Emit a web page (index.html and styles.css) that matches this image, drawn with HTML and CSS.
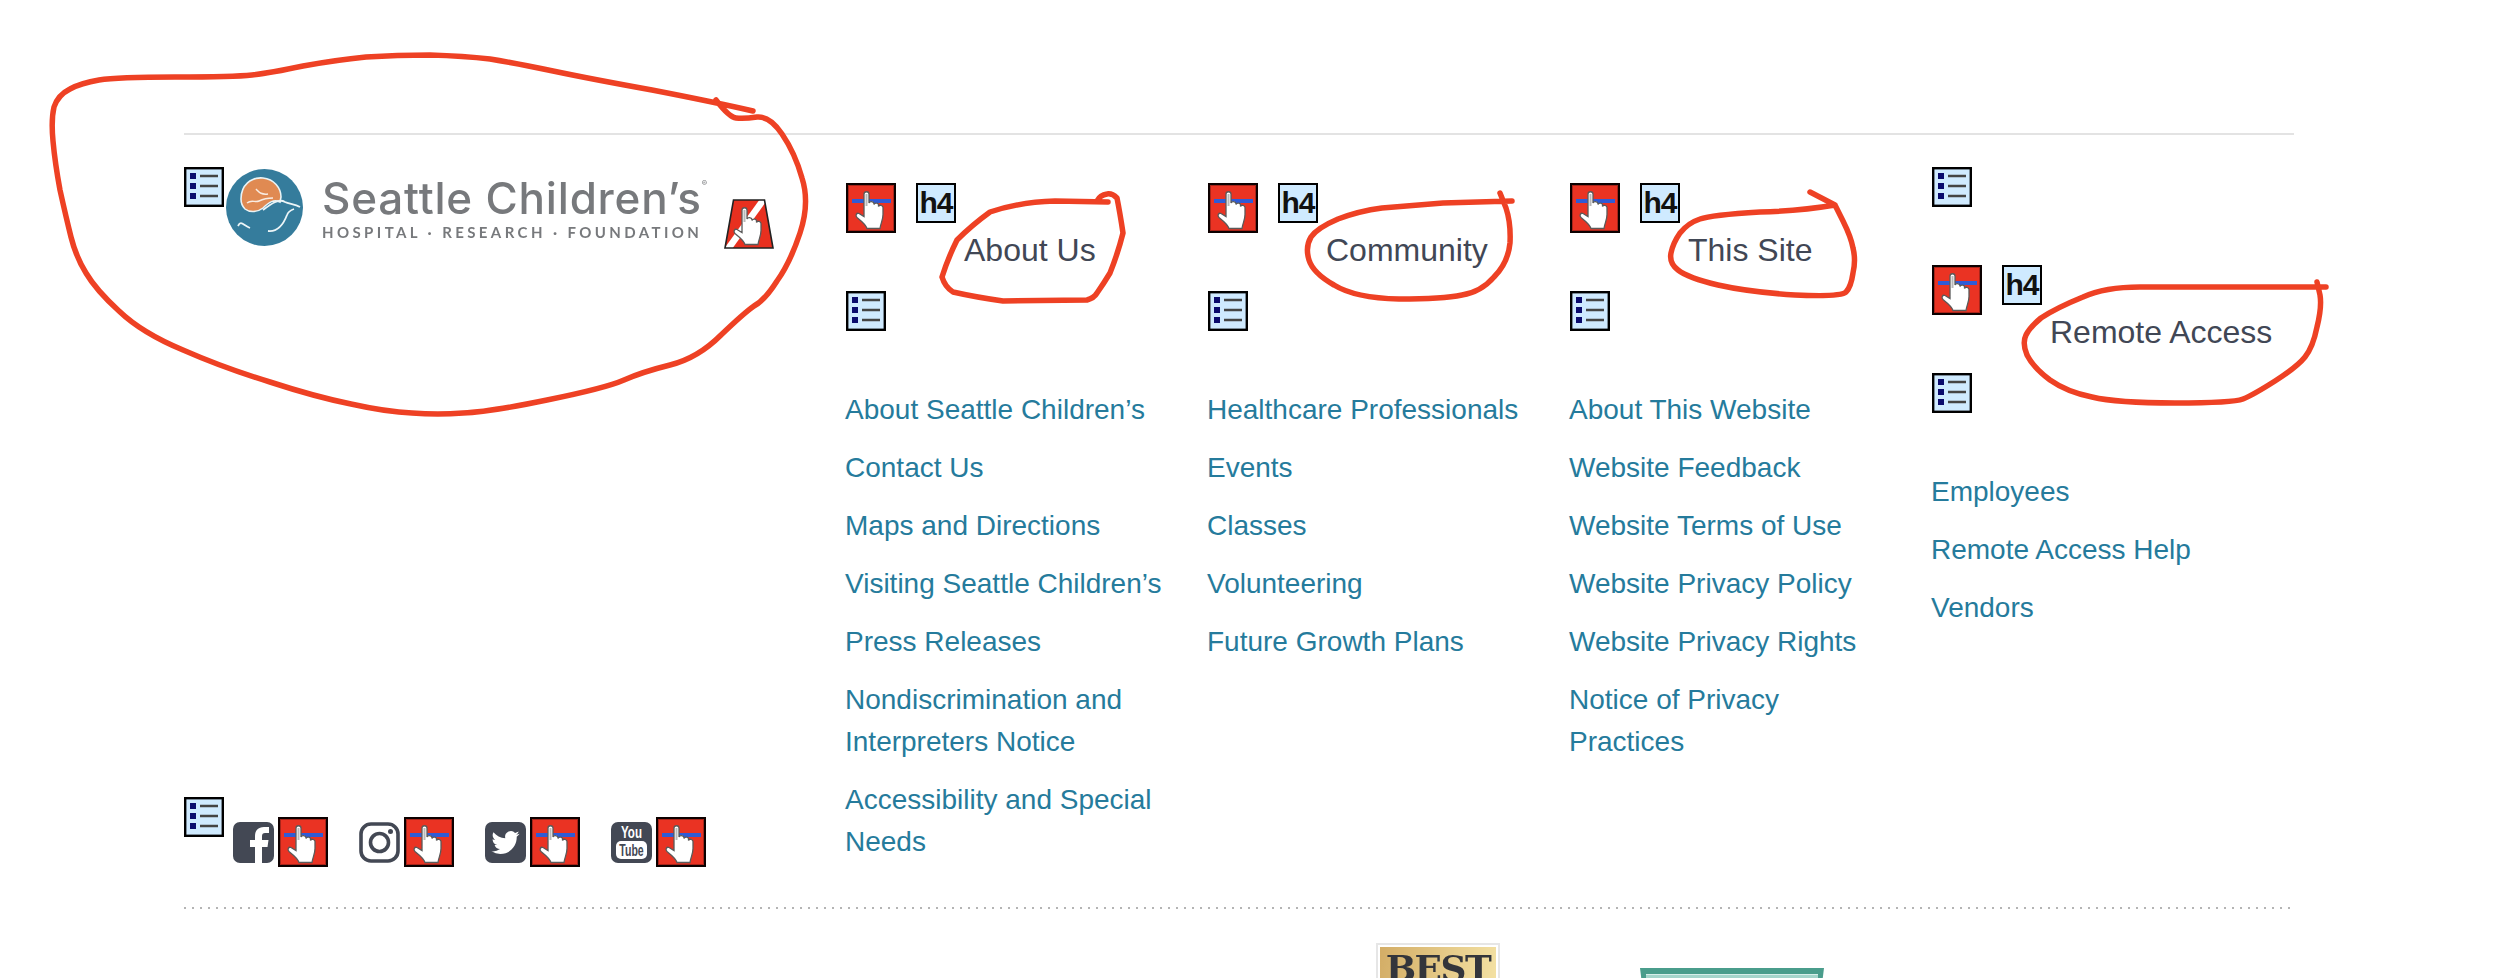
FILE: index.html
```html
<!DOCTYPE html>
<html lang="en">
<head>
<meta charset="utf-8">
<title>Seattle Children's footer</title>
<link rel="stylesheet" href="styles.css">
</head>
<body>
<svg class="sprite" width="0" height="0" aria-hidden="true">
  <defs>
    <symbol id="hand" viewBox="0 0 50 50">
      <path d="M18 11c0-3 5-3 5 0v9c.5-2 4.500-2 5 .5v1c.5-2 4.500-2 4.500.5v1.500c.5-2 4.500-1.500 4.500 1v7c0 5-2 8-3 14H21c-1-4-5-7-10-11-2-2-.5-5 2-4l5 3z" fill="#fff" stroke="#5a5a5a" stroke-width="1.300"/>
      <path d="M19.500 11h2v12h-2z" fill="#b9b9b9"/>
    </symbol>
    <symbol id="hand-box" viewBox="0 0 50 50">
      <rect x="1" y="1" width="48" height="48" fill="#ea3323" stroke="#0c0000" stroke-width="2"/>
      <rect x="2.500" y="2.500" width="45" height="45" fill="none" stroke="#a8251a"/>
      <rect x="6" y="16" width="39" height="4" fill="#2f5bd6"/>
      <use href="#hand"/>
    </symbol>
    <symbol id="list-box" viewBox="0 0 40 40">
      <rect x="1.200" y="1.200" width="37.600" height="37.600" fill="#cfeaff" stroke="#000" stroke-width="2.400"/>
      <rect x="6" y="6" width="6" height="6" fill="#0b0b6d"/>
      <rect x="6" y="16" width="6" height="6" fill="#0b0b6d"/>
      <rect x="6" y="26" width="6" height="6" fill="#0b0b6d"/>
      <path d="M16 9h18M16 19h18M16 29h18" stroke="#444" stroke-width="2.400"/>
    </symbol>
  </defs>
</svg>

<main class="footer">
  <div class="columns">
    <section class="brand">
      <div class="brand-top">
        <svg class="icon-list"><use href="#list-box"/></svg>
        <a class="logo" href="#">
          <svg class="seal" viewBox="0 0 77 77" aria-hidden="true">
            <circle cx="38.500" cy="38.500" r="38.500" fill="#357c9c"/>
            <path d="M15 30c0-14 10-22 22-21 11 1 18 10 18 19l-1 5c-6-3-11 0-17 6-5 4-13 5-18 1-3-3-4-6-4-10z" fill="#e08a52" stroke="#e9f3f5" stroke-width="1.600"/>
            <path d="M21 34c5-4 8 0 12-2s7-3 14-3M30 20c3 3 5 6 12 5" fill="none" stroke="#f8ece2" stroke-width="1.500"/>
            <path d="M37 41c8-6 16-12 22-8 4 2 10 2 15 5M12 57c3-6 5-1 12 2M42 62c8 1 14-3 19-16 1-3 4-5 7-6" fill="none" stroke="#ecf5f7" stroke-width="1.800"/>
          </svg>
          <span class="wordmark">
            <span class="wordmark-name">Seattle Children’s<sup class="reg">®</sup></span>
            <span class="wordmark-sub">HOSPITAL · RESEARCH · FOUNDATION</span>
          </span>
        </a>
        <svg class="trapezoid" viewBox="0 0 50 50" aria-hidden="true">
          <defs><clipPath id="trap"><polygon points="9.500,1 40.500,1 49,49 1,49"/></clipPath></defs>
          <g clip-path="url(#trap)">
            <rect width="50" height="50" fill="#e8301f"/>
            <polygon points="36,0 44,0 8,50 0,50" fill="#fff"/>
          </g>
          <polygon points="9.500,1 40.500,1 49,49 1,49" fill="none" stroke="#222" stroke-width="1.600"/>
          <use href="#hand"/>
        </svg>
      </div>
      <div class="social">
        <svg class="icon-list"><use href="#list-box"/></svg>
        <div class="social-items">
          <a class="social-item" href="#">
            <svg class="social-glyph" viewBox="0 0 41 41" aria-label="Facebook">
              <path d="M7 0h27a7 7 0 0 1 7 7v27a7 7 0 0 1-7 7h-5V25h5.500l1-7H29v-4c0-2 1-3 3-3h4V5h-5c-6 0-9 3.500-9 9v4h-5v7h5v16H7a7 7 0 0 1-7-7V7a7 7 0 0 1 7-7z" fill="#434854"/>
            </svg>
            <svg class="icon-hand"><use href="#hand-box"/></svg>
          </a>
          <a class="social-item" href="#">
            <svg class="social-glyph" viewBox="0 0 41 41" aria-label="Instagram">
              <rect x="2" y="2" width="37" height="37" rx="10" fill="none" stroke="#434854" stroke-width="3.600"/>
              <circle cx="20.500" cy="20.500" r="9" fill="none" stroke="#434854" stroke-width="3.600"/>
              <circle cx="31.500" cy="9.500" r="2.500" fill="#434854"/>
            </svg>
            <svg class="icon-hand"><use href="#hand-box"/></svg>
          </a>
          <a class="social-item" href="#">
            <svg class="social-glyph" viewBox="0 0 41 41" aria-label="Twitter">
              <rect width="41" height="41" rx="7" fill="#434854"/>
              <path transform="translate(6.500 6.500) scale(1.170)" d="M23.953 4.570a10 10 0 0 1-2.825.775 4.958 4.958 0 0 0 2.163-2.723c-.951.555-2.005.959-3.127 1.184a4.920 4.920 0 0 0-8.384 4.482C7.690 8.095 4.067 6.130 1.640 3.162a4.822 4.822 0 0 0-.666 2.475c0 1.710.870 3.213 2.188 4.096a4.904 4.904 0 0 1-2.228-.616v.060a4.923 4.923 0 0 0 3.946 4.827 4.996 4.996 0 0 1-2.212.085 4.936 4.936 0 0 0 4.604 3.417 9.867 9.867 0 0 1-6.102 2.105c-.390 0-.779-.023-1.170-.067a13.995 13.995 0 0 0 7.557 2.209c9.053 0 13.998-7.496 13.998-13.985 0-.210 0-.420-.015-.630A9.935 9.935 0 0 0 24 4.590z" fill="#fff"/>
            </svg>
            <svg class="icon-hand"><use href="#hand-box"/></svg>
          </a>
          <a class="social-item" href="#">
            <svg class="social-glyph" viewBox="0 0 41 41" aria-label="YouTube">
              <rect width="41" height="41" rx="7" fill="#434854"/>
              <text class="yt-you" transform="translate(20.500 15.700) scale(.68 1)" text-anchor="middle">You</text>
              <rect x="5" y="19" width="31" height="18" rx="5" fill="#fff"/>
              <text class="yt-tube" transform="translate(20.500 34) scale(.62 1)" text-anchor="middle">Tube</text>
            </svg>
            <svg class="icon-hand"><use href="#hand-box"/></svg>
          </a>
        </div>
      </div>
    </section>

    <section class="col">
      <div class="col-icons">
        <svg class="icon-hand"><use href="#hand-box"/></svg>
        <span class="h4-tag">h4</span>
      </div>
      <h4 class="col-title">About Us</h4>
      <svg class="icon-list"><use href="#list-box"/></svg>
      <ul class="links">
        <li><a href="#">About Seattle Children’s</a></li>
        <li><a href="#">Contact Us</a></li>
        <li><a href="#">Maps and Directions</a></li>
        <li><a href="#">Visiting Seattle Children’s</a></li>
        <li><a href="#">Press Releases</a></li>
        <li><a href="#">Nondiscrimination and Interpreters Notice</a></li>
        <li><a href="#">Accessibility and Special Needs</a></li>
      </ul>
    </section>

    <section class="col">
      <div class="col-icons">
        <svg class="icon-hand"><use href="#hand-box"/></svg>
        <span class="h4-tag">h4</span>
      </div>
      <h4 class="col-title">Community</h4>
      <svg class="icon-list"><use href="#list-box"/></svg>
      <ul class="links">
        <li><a href="#">Healthcare Professionals</a></li>
        <li><a href="#">Events</a></li>
        <li><a href="#">Classes</a></li>
        <li><a href="#">Volunteering</a></li>
        <li><a href="#">Future Growth Plans</a></li>
      </ul>
    </section>

    <section class="col">
      <div class="col-icons">
        <svg class="icon-hand"><use href="#hand-box"/></svg>
        <span class="h4-tag">h4</span>
      </div>
      <h4 class="col-title">This Site</h4>
      <svg class="icon-list"><use href="#list-box"/></svg>
      <ul class="links">
        <li><a href="#">About This Website</a></li>
        <li><a href="#">Website Feedback</a></li>
        <li><a href="#">Website Terms of Use</a></li>
        <li><a href="#">Website Privacy Policy</a></li>
        <li><a href="#">Website Privacy Rights</a></li>
        <li><a href="#">Notice of Privacy Practices</a></li>
      </ul>
    </section>

    <section class="col col-remote">
      <svg class="icon-list icon-list-lead"><use href="#list-box"/></svg>
      <div class="col-icons">
        <svg class="icon-hand"><use href="#hand-box"/></svg>
        <span class="h4-tag">h4</span>
      </div>
      <h4 class="col-title">Remote Access</h4>
      <svg class="icon-list"><use href="#list-box"/></svg>
      <ul class="links">
        <li><a href="#">Employees</a></li>
        <li><a href="#">Remote Access Help</a></li>
        <li><a href="#">Vendors</a></li>
      </ul>
    </section>
  </div>

  <div class="dotted"></div>

  <div class="badges">
    <div class="badge-best"><span class="badge-best-text">BEST</span></div>
    <div class="badge-teal"><div class="badge-teal-inner"></div></div>
  </div>
</main>

<svg class="scribbles" viewBox="0 0 2514 978" aria-hidden="true">
  <path d="M753 111Q714 102 652 90Q591 79 553 71Q515 63 490 59Q464 56 430 55Q397 55 366 57Q336 60 303 66Q270 73 252 75Q234 77 175 77Q117 77 99 80Q81 83 70 89Q58 95 54 107Q51 120 53 141Q55 163 60 190Q66 217 71 237Q76 257 86 273Q96 290 119 311Q142 333 183 350Q224 368 270 382Q316 397 351 404Q387 412 412 413Q438 415 463 413Q489 412 547 400Q606 388 624 380Q642 372 670 365Q698 358 721 335Q744 313 754 306Q765 300 777 281Q790 263 800 233Q810 203 802 178Q795 153 782 134Q770 116 757 117Q744 119 736 118Q729 117 716 100"/>
  <path d="M1108 202L1055 201Q1020 202 990 212Q972 225 957 240Q948 258 942 277Q945 287 953 292Q975 297 1003 301L1087 300Q1094 298 1097 293Q1104 283 1110 273Q1118 253 1123 233Q1120 213 1117 198Q1112 193 1107 194Q1100 195 1097 201"/>
  <path d="M1512 201L1443 203Q1405 206 1382 208Q1359 211 1338 219Q1317 228 1311 237Q1305 247 1309 260Q1313 273 1334 285Q1355 298 1399 299Q1443 299 1462 295Q1481 292 1494 277Q1508 263 1510 243Q1511 223 1506 208L1500 193"/>
  <path d="M1810 192L1835 205Q1800 211 1760 212Q1711 215 1700 219Q1688 223 1680 233Q1673 243 1671 253Q1669 263 1678 270Q1688 278 1718 285Q1749 292 1795 295Q1841 297 1846 292Q1851 287 1853 273Q1856 260 1853 248Q1851 237 1843 221L1835 205"/>
  <path d="M2326 287L2140 287Q2105 287 2083 297Q2056 308 2041 318Q2030 327 2026 335Q2022 343 2027 355Q2033 367 2050 380Q2067 392 2092 397Q2117 403 2175 403Q2233 403 2243 399Q2253 395 2275 381Q2297 367 2305 357Q2313 347 2317 327Q2322 307 2320 295L2317 282"/>
</svg>
</body>
</html>
```
FILE: styles.css
```css
html, body {
  margin: 0;
  padding: 0;
  height: 978px;
  overflow: hidden;
  background: #fff;
}

body {
  position: relative;
  font-family: "Liberation Sans", Arial, sans-serif;
  color: #414755;
}

.sprite {
  position: absolute;
}

.footer {
  width: 2110px;
  height: 978px;
  overflow: hidden;
  margin-left: 184px;
  padding-top: 133px;
  box-sizing: border-box;
}

.columns {
  display: flex;
  border-top: 2px solid #e3e3e3;
  height: 772px;
  box-sizing: content-box;
}

.brand {
  width: 662px;
  flex: none;
  display: flex;
  flex-direction: column;
  justify-content: space-between;
  padding: 32px 0 40px;
  box-sizing: border-box;
}

.brand-top {
  display: flex;
  align-items: flex-start;
}

.logo {
  display: flex;
  align-items: flex-start;
  margin: 2px 0 0 2px;
  text-decoration: none;
  filter: blur(0.5px);
}

.seal {
  width: 77px;
  height: 77px;
  flex: none;
}

.wordmark {
  display: flex;
  flex-direction: column;
  margin-left: 19px;
  width: 400px;
  font-family: Inter, Lato, "Liberation Sans", sans-serif;
  color: #77797c;
  white-space: nowrap;
}

.wordmark-name {
  font-size: 44px;
  font-weight: 500;
  line-height: 48px;
  letter-spacing: 0.8px;
  margin-top: 5px;
}

.reg {
  font-size: 8px;
  line-height: 0;
  vertical-align: 28px;
}

.wordmark-sub {
  font-family: Lato, "Liberation Sans", sans-serif;
  font-size: 15px;
  font-weight: 700;
  line-height: 18px;
  letter-spacing: 3.4px;
  margin-top: 1px;
}

.trapezoid {
  width: 50px;
  height: 50px;
  flex: none;
  margin: 32px 0 0 2px;
  filter: blur(0.35px);
}

.icon-list {
  display: block;
  width: 40px;
  height: 40px;
  flex: none;
}

.icon-hand {
  display: block;
  width: 50px;
  height: 50px;
  flex: none;
  filter: blur(0.35px);
}

.social {
  display: flex;
  align-items: flex-start;
}

.social-items {
  display: flex;
  gap: 31px;
  margin: 20px 0 0 9px;
}

.social-item {
  display: flex;
  gap: 4px;
  text-decoration: none;
}

.social-glyph {
  width: 41px;
  height: 41px;
  margin-top: 5px;
  flex: none;
}

.yt-you,
.yt-tube {
  font-family: "Liberation Sans", Arial, sans-serif;
  font-weight: 700;
  font-size: 17px;
}

.yt-you {
  fill: #fff;
}

.yt-tube {
  fill: #434854;
}

.col {
  width: 362px;
  flex: none;
  padding: 48px 32px 0 0;
  box-sizing: border-box;
}

.col-remote {
  padding-top: 32px;
}

.icon-list-lead {
  margin-bottom: 58px;
}

.col-icons {
  display: flex;
  align-items: flex-start;
  gap: 20px;
}

.h4-tag {
  display: block;
  width: 40px;
  height: 40px;
  box-sizing: border-box;
  border: 2.4px solid #000;
  background: #cfeaff;
  color: #111;
  font-weight: 700;
  font-size: 30px;
  line-height: 35px;
  letter-spacing: -1px;
  text-align: center;
}

.col-title {
  margin: 0 0 22px 118px;
  font-size: 32px;
  font-weight: 400;
  line-height: 35px;
  padding-bottom: 1px;
  color: #414755;
  white-space: nowrap;
}

.links {
  list-style: none;
  margin: 58px 0 0 -1px;
  padding: 0;
}

.links li {
  margin-bottom: 16px;
  font-size: 28px;
  line-height: 42px;
}

.links a {
  color: #257b9c;
  text-decoration: none;
}

.dotted {
  height: 2px;
  background-image: repeating-linear-gradient(to right, #b4b4b4 0 2px, transparent 2px 8px);
}

.badges {
  display: flex;
  align-items: flex-start;
  padding: 34px 0 0 1192px;
  gap: 140px;
}

.badge-best {
  width: 124px;
  height: 120px;
  flex: none;
  box-sizing: border-box;
  border: 2px solid #e6e6e6;
  padding: 2px;
  background: #fff;
  overflow: hidden;
  filter: blur(0.5px);
}

.badge-best-text {
  display: block;
  height: 100%;
  background: linear-gradient(100deg, #d3ad66, #f7e7aa);
  font-family: "DejaVu Serif", "Liberation Serif", serif;
  font-weight: 700;
  font-size: 36px;
  line-height: 42px;
  letter-spacing: -1.5px;
  color: #33353b;
  text-align: center;
}

.badge-teal {
  width: 184px;
  height: 60px;
  flex: none;
  margin-top: 25px;
  background: #4a9d8c;
  clip-path: polygon(0 0, 100% 0, 96% 100%, 4% 100%);
  padding: 6px 6px 0;
  box-sizing: border-box;
  filter: blur(0.4px);
}

.badge-teal-inner {
  height: 100%;
  background: #a5d5cb;
  border-top: 1px solid #d8efea;
}

.scribbles {
  position: absolute;
  left: 0;
  top: 0;
  width: 2514px;
  height: 978px;
  pointer-events: none;
  fill: none;
  stroke: #ee4124;
  stroke-width: 5.5;
  stroke-linecap: round;
  stroke-linejoin: round;
}
```
